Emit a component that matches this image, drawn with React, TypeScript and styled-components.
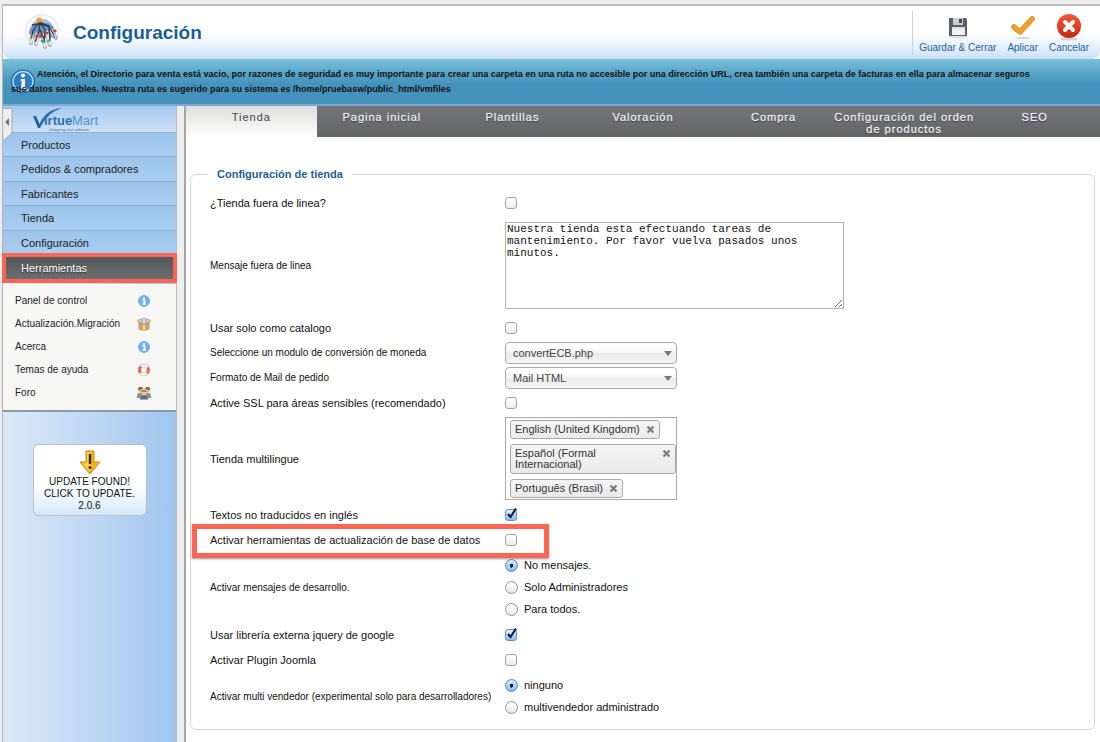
import React from 'react';
import styled, { createGlobalStyle, css } from 'styled-components';

const GlobalStyle = createGlobalStyle`
  *, *::after { box-sizing: border-box; }
  body {
    margin: 0;
    background: #eeeeee;
    color: #111;
    font-family: "Liberation Sans", Arial, sans-serif;
    font-size: 11px;
  }
  button, input, select, textarea { font: inherit; color: inherit; margin: 0; }
`;

const Page = styled.div`
  min-height: 100vh;
  padding: 4px 0 0 2px;
  display: flex;
  flex-direction: column;
`;

const Shell = styled.div`
  flex: 1;
  display: flex;
  flex-direction: column;
  border-top: 2px solid #b9b9b9;
  border-left: 1px solid #b4b4b4;
  background: #fff;
`;

const Header = styled.header`
  height: 53px;
  display: flex;
  align-items: center;
  justify-content: space-between;
  padding-left: 20px;
  background: linear-gradient(#ffffff 0%, #ffffff 50%, #e8f2fc 75%, #cae0f8 100%);
  border-radius: 0 0 8px 8px;
`;

const TitleGroup = styled.div`
  display: flex;
  align-items: center;
  gap: 11px;
`;

const Title = styled.h1`
  margin: 0;
  font-size: 19px;
  line-height: 24px;
  color: #1b5f98;
`;

const Toolbar = styled.div`
  display: flex;
  align-items: flex-end;
  height: 44px;
  gap: 11px;
  padding: 0 11px 1px 6px;
  border-left: 1px solid #cfcfcf;
`;

const ToolButton = styled.button`
  display: flex;
  flex-direction: column;
  align-items: center;
  border: 0;
  padding: 0;
  background: none;
  color: #1f5f99;
  font-size: 10px;
  line-height: 12px;
`;

const Notice = styled.div`
  position: relative;
  height: 47px;
  padding: 8px 60px 0 8px;
  background: linear-gradient(#7cc1da 0%, #5aa6c9 30%, #4592bd 55%, #4592bd 100%);
  border-bottom: 2px solid #7fa9d2;
  font-size: 9px;
  font-weight: bold;
  line-height: 15px;
  p { position: relative; margin: 0; text-indent: 26px; }
`;

const NoticeIcon = styled.svg`
  position: absolute;
  left: 7px;
  top: 9px;
`;

const Body = styled.div`
  flex: 1;
  display: grid;
  grid-template-columns: 183px minmax(0, 1fr);
`;

const Side = styled.aside`
  position: relative;
  display: flex;
  flex-direction: column;
  background: linear-gradient(90deg, #dbe9f8 0%, #bcd6f3 55%, #9cc3ec 100%);
  border-right: 2px solid #a6a6a6;
  box-shadow: inset -7px 0 0 #eeeeee, inset -8px 0 0 #bcbcbc;
  padding-right: 8px;
`;

const Collapse = styled.button`
  position: absolute;
  left: 0;
  top: 2px;
  border: 0;
  padding: 0;
  background: none;
  line-height: 0;
`;

const Brand = styled.a`
  height: 26px;
  padding-left: 28px;
  background: linear-gradient(#a5c9f0, #cfe2f7);
  line-height: 0;
`;

const Menu = styled.nav`
  display: flex;
  flex-direction: column;
`;

const MenuItem = styled.a<{ $active?: boolean }>`
  height: 24px;
  padding-left: 18px;
  line-height: 24px;
  text-decoration: none;
  color: #222;
  background: linear-gradient(#9dc4ea, #aacdf2);
  border-top: 1px solid #8ab0da;
  &:nth-child(even) { height: 25px; }
  ${p => p.$active && css`
    && { height: 22px; }
    margin: 3px 3px 5px;
    padding-left: 15px;
    line-height: 22px;
    color: #fff;
    border: 0;
    background: linear-gradient(#56575a, #6b6c70);
    outline: 4px solid #fb6554;
    text-shadow: 0 1px 1px #333;
  `}
`;

const SubMenu = styled.nav`
  padding: 5px 0 6px;
  background: #f7f7f6;
  border-bottom: 2px solid #8c9aa8;
`;

const SubItem = styled.a`
  display: grid;
  grid-template-columns: 122px 16px;
  align-items: center;
  height: 23px;
  padding-left: 12px;
  font-size: 10px;
  color: #222;
  text-decoration: none;
`;

const UpdateBox = styled.a`
  display: flex;
  flex-direction: column;
  align-items: center;
  align-self: center;
  width: 114px;
  margin-top: 32px;
  padding: 5px 0 3px;
  border: 1px solid #b6bfc9;
  border-radius: 6px;
  background: linear-gradient(#fff 0%, #fff 55%, #d6e8fa 100%);
  color: #111;
  text-align: center;
  text-decoration: none;
  font-size: 10px;
  line-height: 12px;
`;

const Main = styled.main`
  min-width: 0;
`;

const Tabs = styled.div`
  display: grid;
  grid-template-columns: repeat(7, minmax(0, 1fr));
  height: 31px;
  background: linear-gradient(#747578, #636468);
`;

const Tab = styled.button<{ $active?: boolean }>`
  display: flex;
  justify-content: center;
  align-items: flex-start;
  border: 0;
  padding: 5px 0 0;
  background: none;
  color: #f4f4f4;
  font-size: 11px;
  line-height: 12px;
  letter-spacing: 1px;
  white-space: pre;
  text-shadow: 0 1px 1px #333, 0 0 1px #fff;
  ${p => p.$active && css`
    background: linear-gradient(#dededc, #ffffff);
    color: #444;
    text-shadow: none;
  `}
`;

const Fieldset = styled.fieldset`
  margin: 30px 5px 0 4px;
  padding: 9px 0 9px 19px;
  border: 1px solid #d4d4d4;
  border-radius: 6px;
`;

const Legend = styled.legend`
  margin-left: -2px;
  padding: 0 9px;
  color: #1b5f98;
  font-weight: bold;
  line-height: 14px;
`;

const Row = styled.div<{ $h?: number; $marked?: boolean }>`
  position: relative;
  display: grid;
  grid-template-columns: 295px minmax(0, 1fr);
  align-items: center;
  min-height: ${p => p.$h ?? 25}px;
  ${p => p.$marked && css`
    &::after {
      content: "";
      position: absolute;
      left: -18px;
      top: -3px;
      width: 357px;
      height: 34px;
      border: 5px solid #fb6554;
      box-shadow: 0 1px 2px #999;
      pointer-events: none;
    }
  `}
`;

const Label = styled.label<{ $small?: boolean }>`
  font-size: ${p => (p.$small ? 10 : 11)}px;
  white-space: nowrap;
`;

const Check = styled.input.attrs({ type: 'checkbox' })`
  appearance: none;
  display: block;
  width: 12px;
  height: 12px;
  border: 1px solid #a4a4a4;
  border-radius: 3px;
  background: linear-gradient(#fff, #ececec);
  &:checked {
    border-color: #6b8fb8;
    background: linear-gradient(#e3f1fd, #8cbdf0);
  }
`;

const CheckWrap = styled.span`
  position: relative;
  width: 12px;
  svg { position: absolute; left: 1px; top: -2px; pointer-events: none; }
  input:not(:checked) + svg { display: none; }
`;

const RadioGroup = styled.div`
  display: flex;
  flex-direction: column;
`;

const RadioLine = styled.label`
  display: flex;
  align-items: center;
  gap: 6px;
  height: 22px;
`;

const Radio = styled.input.attrs({ type: 'radio' })`
  appearance: none;
  width: 13px;
  height: 13px;
  border: 1px solid #949494;
  border-radius: 50%;
  background: linear-gradient(#fff, #e8e8e8);
  &:checked {
    border-color: #5f86b3;
    background: radial-gradient(circle, #0d2340 0 2px, transparent 2px), linear-gradient(#d8eafb, #86bbf0);
  }
`;

const Message = styled.textarea`
  display: block;
  width: 339px;
  height: 87px;
  padding: 0 1px;
  border: 1px solid #b3b3b3;
  background: #fff;
  font-family: "Liberation Mono", "Courier New", monospace;
  font-size: 11px;
  line-height: 12px;
`;

const SelectWrap = styled.span`
  position: relative;
  width: 172px;
  svg { position: absolute; right: 5px; top: 9px; pointer-events: none; }
`;

const Select = styled.select`
  appearance: none;
  display: block;
  width: 100%;
  height: 22px;
  padding: 0 7px;
  border: 1px solid #a9a9a9;
  border-radius: 4px;
  background: linear-gradient(#fff 20%, #f4f4f4 50%, #ebebeb 52%, #f4f4f4 100%);
  color: #444;
`;

const TagBox = styled.div`
  width: 172px;
  height: 83px;
  display: flex;
  flex-direction: column;
  align-items: flex-start;
  gap: 5px;
  padding: 2px 0 2px 4px;
  border: 1px solid #aaa;
  background: #fff;
`;

const Tag = styled.span`
  display: flex;
  gap: 6px;
  padding: 3px 4px;
  border: 1px solid #aaa;
  border-radius: 3px;
  background: linear-gradient(#f5f5f5, #eaeaea);
  color: #333;
  line-height: 11px;
`;

const Remove = styled.button`
  display: block;
  height: 11px;
  border: 0;
  padding: 0;
  background: none;
  line-height: 0;
`;

const CheckBox = ({ id, on }: { id: string; on?: boolean }) => (
  <CheckWrap>
    <Check id={id} defaultChecked={on} />
    <svg width="12" height="12" viewBox="0 0 12 12">
      <path d="M2 7 L4.5 10 L10 1.5" fill="none" stroke="#0f2238" strokeWidth="2.2" />
    </svg>
  </CheckWrap>
);

const CheckRow = ({ id, text, on, marked }: { id: string; text: string; on?: boolean; marked?: boolean }) => (
  <Row $marked={marked}>
    <Label htmlFor={id}>{text}</Label>
    <CheckBox id={id} on={on} />
  </Row>
);

const SelectRow = ({ id, text, value }: { id: string; text: string; value: string }) => (
  <Row>
    <Label htmlFor={id} $small>{text}</Label>
    <SelectWrap>
      <Select id={id}><option>{value}</option></Select>
      <svg width="8" height="5"><path d="M0 0 H8 L4 5 Z" fill="#777" /></svg>
    </SelectWrap>
  </Row>
);

const RadioRow = ({ name, text, options, h }: { name: string; text: string; options: string[]; h: number }) => (
  <Row $h={h} role="radiogroup" aria-label={text}>
    <Label as="span" $small>{text}</Label>
    <RadioGroup>
      {options.map((o, i) => (
        <RadioLine key={o}><Radio name={name} defaultChecked={i === 0} />{o}</RadioLine>
      ))}
    </RadioGroup>
  </Row>
);

const Language = ({ children }: { children: React.ReactNode }) => (
  <Tag>
    <span>{children}</span>
    <Remove type="button" aria-label="Quitar">
      <svg width="9" height="11" viewBox="0 0 9 11">
        <path d="M1.5 2.5 L7.5 8.5 M7.5 2.5 L1.5 8.5" stroke="#777" strokeWidth="2" />
      </svg>
    </Remove>
  </Tag>
);

const ConfigIcon = () => (
  <svg width="39" height="38" viewBox="0 0 39 38">
    <circle cx="19" cy="17" r="17" fill="#e6ebf1" />
    <circle cx="19" cy="17" r="15.500" fill="#fafbfc" />
    <path d="M6 20 A13 13 0 1 1 32 20 L28 24 L10 24Z" fill="#6f93c4" />
    <path d="M8 11 Q19 -2 30 11 Q20 6 8 11Z" fill="#a9c0df" />
    <g fill="none" stroke="#adadb2" strokeWidth="4" strokeLinecap="round">
      <path d="M9 22 L8 29 M14 23 L13 30 M20 24 L22 33 M25 23 L27 31 M30 19 L33 24" />
    </g>
    <g fill="none" stroke="#e6e6e9" strokeWidth="3" strokeLinecap="round">
      <path d="M9 21 L8 28 M14 20 L13 29 M20 21 L22 32 M24 18 L27 30 M28 16 L32 23" />
    </g>
    <g fill="none" stroke="#34383f" strokeWidth="1.300">
      <path d="M16 8 L10 17 L8 25 M17 8 L16 17 L12 28 M17 8 L22 16 L21 29 M17 8 L26 13 L27 27 M17 16 L21 25 M26 13 L31 21" />
    </g>
    <path d="M9 11 Q16 9 26 12" fill="none" stroke="#34383f" strokeWidth="1.500" />
    <circle cx="16" cy="6" r="2.600" fill="#f2a024" />
    <g fill="#e8331f"><circle cx="14" cy="22" r="1.500" /><circle cx="24" cy="19" r="1.500" /><circle cx="32" cy="17" r="1.600" /><circle cx="18" cy="22" r="1.500" /></g>
    <g fill="#3f8ee0"><circle cx="19" cy="27" r="1.400" /><circle cx="31" cy="23" r="1.400" /><circle cx="29" cy="13" r="1.300" /></g>
    <g fill="#4cc94a"><circle cx="25" cy="27" r="1.600" /><circle cx="8" cy="24" r="1.300" /></g>
  </svg>
);

const SaveIcon = () => (
  <svg width="26" height="30" viewBox="0 0 26 30">
    <ellipse cx="13" cy="25" rx="10" ry="1.5" fill="#dedede" />
    <path d="M4 6 H21 L22 8 V24 H4Z" fill="#5c5f65" />
    <path d="M8 6 H18 V13 H8Z" fill="#c9cbd0" /><path d="M14 7 H17 V11 H14Z" fill="#45484e" />
    <path d="M7 15 H20 V23 H7Z" fill="#f1f1f1" /><path d="M7 16 H20" stroke="#ccc" />
  </svg>
);

const ApplyIcon = () => (
  <svg width="28" height="30" viewBox="0 0 28 30">
    <ellipse cx="14" cy="26" rx="7" ry="1" fill="#d5d5d5" />
    <path d="M5 15 L11 20 L23 7" fill="none" stroke="#d9861d" strokeWidth="5.5" strokeLinecap="round" strokeLinejoin="round" />
    <path d="M5 15 L11 20 L23 7" fill="none" stroke="#f1a02c" strokeWidth="4" strokeLinecap="round" strokeLinejoin="round" />
  </svg>
);

const CancelIcon = () => (
  <svg width="28" height="30" viewBox="0 0 28 30">
    <defs><linearGradient id="red" x2="0" y2="1"><stop stopColor="#f4573b" /><stop offset=".55" stopColor="#e33b1f" /><stop offset="1" stopColor="#b52a12" /></linearGradient></defs>
    <ellipse cx="14" cy="27" rx="9" ry="1.6" fill="#cfd3d8" />
    <circle cx="14" cy="14" r="12" fill="url(#red)" />
    <path d="M10 10 L18 18 M18 10 L10 18" stroke="#fff" strokeWidth="4" strokeLinecap="round" />
  </svg>
);

const InfoIcon = () => (
  <svg width="14" height="14" viewBox="0 0 14 14">
    <circle cx="7" cy="7" r="5.4" fill="#74b3ea" stroke="#5f9fdb" />
    <path d="M5.5 6 H7.5 V10 M5.5 10 H9" fill="none" stroke="#fff" strokeWidth="1.6" /><circle cx="7" cy="3.9" r="1" fill="#fff" />
  </svg>
);

const BoxIcon = () => (
  <svg width="14" height="14" viewBox="0 0 14 14">
    <path d="M2 6 H12 V12 L7 13.5 L2 12Z" fill="#d9a565" stroke="#b98448" strokeWidth=".7" />
    <path d="M2 6 L0.5 3.5 L4 2 L7 5 L10 2 L13.5 3.5 L12 6Z" fill="#efc68f" stroke="#b98448" strokeWidth=".7" />
    <circle cx="7" cy="3.8" r="3" fill="#8ec1ee" /><path d="M7 2 V6" stroke="#fff" strokeWidth="1.2" />
    <path d="M7 8 V13" stroke="#f3d5a8" strokeWidth="2" />
  </svg>
);

const HelpIcon = () => (
  <svg width="14" height="14" viewBox="0 0 14 14">
    <circle cx="7" cy="7" r="4.5" fill="none" stroke="#c4c4c4" strokeWidth="3.4" />
    <circle cx="7" cy="7" r="4.5" fill="none" stroke="#f8f8f8" strokeWidth="2.2" />
    <circle cx="7" cy="7" r="4.5" fill="none" stroke="#f26450" strokeWidth="2.8" strokeDasharray="7 7.13" strokeDashoffset="3.5" />
  </svg>
);

const PeopleIcon = () => (
  <svg width="14" height="14" viewBox="0 0 14 14">
    <path d="M0 11 Q0 6 4 7 L10 7 Q14 6 14 11 V12 H0Z" fill="#8b939b" />
    <circle cx="3.5" cy="4" r="2.5" fill="#e8b98c" /><path d="M1 4 Q1 0.5 3.5 1 Q6 .5 6 3Z" fill="#8a5a35" />
    <circle cx="10.5" cy="4" r="2.5" fill="#e8b98c" /><path d="M8 3 Q9 .5 11 1 Q13.5 1 13 4Z" fill="#8a5a35" />
    <path d="M3 13.5 Q3 9 7 9 Q11 9 11 13.5Z" fill="#646c75" />
    <circle cx="7" cy="7" r="2.5" fill="#f3c89c" /><path d="M4.5 6.5 Q4.5 3.5 7 3.8 Q9.5 3.5 9.5 6.5 L7 5.5Z" fill="#a77343" />
  </svg>
);

const BrandLogo = () => (
  <svg width="70" height="26" viewBox="0 0 70 26">
    <path d="M7 22 Q13 3 31 2 Q17 6 9 22Z" fill="#2c6fae" />
    <path d="M2 10 H5 L9 19 L8 22 H7Z" fill="#235f9d" />
    <text x="13" y="19" fontFamily="Liberation Sans" fontSize="13" fontWeight="bold" fill="#2d70ac">irtue</text>
    <text x="41" y="19" fontFamily="Liberation Sans" fontSize="13" fill="#4a92cd">Mart</text>
    <text x="18" y="25" fontFamily="Liberation Sans" fontSize="4" fill="#4e6d90">shopping cart software</text>
  </svg>
);

const menu = ['Productos', 'Pedidos & compradores', 'Fabricantes', 'Tienda', 'Configuración', 'Herramientas'];
const tabs = ['Tienda', 'Pagina inicial', 'Plantillas', 'Valoración', 'Compra', 'Configuración del orden\nde productos', 'SEO'];
const tools: [string, React.ReactNode][] = [
  ['Panel de control', <InfoIcon />],
  ['Actualización.Migración', <BoxIcon />],
  ['Acerca', <InfoIcon />],
  ['Temas de ayuda', <HelpIcon />],
  ['Foro', <PeopleIcon />],
];

export default function App() {
  return (
    <Page>
      <GlobalStyle />
      <Shell>
        <Header>
          <TitleGroup><ConfigIcon /><Title>Configuración</Title></TitleGroup>
          <Toolbar>
            <ToolButton><SaveIcon />Guardar &amp; Cerrar</ToolButton>
            <ToolButton><ApplyIcon />Aplicar</ToolButton>
            <ToolButton><CancelIcon />Cancelar</ToolButton>
          </Toolbar>
        </Header>
        <Notice>
          <NoticeIcon width="26" height="27" viewBox="0 0 26 27">
            <circle cx="13" cy="13.5" r="11.5" fill="#2b7cc4" stroke="#1c5f9f" />
            <circle cx="13" cy="13.5" r="10" fill="none" stroke="#b5d8f2" strokeWidth="1.4" />
            <path d="M11 11 H15 V19 H16 V21 H10 V19 H11.500 V13 H10.500Z" fill="#fff" /><circle cx="13" cy="7.500" r="2" fill="#fff" />
          </NoticeIcon>
          <p>Atención, el Directorio para venta está vacio, por razones de seguridad es muy importante para crear una carpeta en una ruta no accesible por una dirección URL, crea también una carpeta de facturas en ella para almacenar seguros sus datos sensibles. Nuestra ruta es sugerido para su sistema es /home/pruebasw/public_html/vmfiles</p>
        </Notice>
        <Body>
          <Side>
            <Brand href="#" aria-label="VirtueMart"><BrandLogo /></Brand>
            <Collapse aria-label="Contraer menú">
              <svg width="10" height="34" viewBox="0 0 10 34">
                <path d="M0 .5 H9 V25 L.5 32.500" fill="#ededed" stroke="#a8a8a8" />
                <path d="M6 10 V18 L2 14Z" fill="#777" />
              </svg>
            </Collapse>
            <Menu>
              {menu.map(m => <MenuItem key={m} href="#" $active={m === 'Herramientas'}>{m}</MenuItem>)}
            </Menu>
            <SubMenu>
              {tools.map(([t, icon]) => <SubItem key={t} href="#"><span>{t}</span>{icon}</SubItem>)}
            </SubMenu>
            <UpdateBox href="#">
              <svg width="24" height="26" viewBox="0 0 24 26">
                <path d="M8 1 H16 V12 H22 L12 24 L2 12 H8Z" fill="#f5b322" stroke="#d08a12" />
                <path d="M9 2 H12 V22 L4 13 H9Z" fill="#fbd04f" />
                <path d="M12 4 V14" stroke="#3b2a08" strokeWidth="2.4" /><circle cx="12" cy="17.5" r="1.5" fill="#3b2a08" />
              </svg>
              <span>UPDATE FOUND!<br />CLICK TO UPDATE.<br />2.0.6</span>
            </UpdateBox>
          </Side>
          <Main>
            <Tabs role="tablist">
              {tabs.map((t, i) => (
                <Tab key={t} role="tab" aria-selected={i === 0} $active={i === 0}>{t}</Tab>
              ))}
            </Tabs>
            <Fieldset>
              <Legend>Configuración de tienda</Legend>
              <CheckRow id="offline" text="¿Tienda fuera de linea?" />
              <Row $h={100}>
                <Label htmlFor="msg" $small>Mensaje fuera de linea</Label>
                <Message id="msg" defaultValue="Nuestra tienda esta efectuando tareas de mantenimiento. Por favor vuelva pasados unos minutos." />
              </Row>
              <CheckRow id="catalog" text="Usar solo como catalogo" />
              <SelectRow id="currency" text="Seleccione un modulo de conversión de moneda" value="convertECB.php" />
              <SelectRow id="mail" text="Formato de Mail de pedido" value="Mail HTML" />
              <CheckRow id="ssl" text="Active SSL para áreas sensibles (recomendado)" />
              <Row $h={87}>
                <Label as="span">Tienda multilingue</Label>
                <TagBox>
                  <Language>English (United Kingdom)</Language>
                  <Language>Español (Formal Internacional)</Language>
                  <Language>Português (Brasil)</Language>
                </TagBox>
              </Row>
              <CheckRow id="english" text="Textos no traducidos en inglés" on />
              <CheckRow id="dbtools" text="Activar herramientas de actualización de base de datos" marked />
              <RadioRow name="debug" h={70} text="Activar mensajes de desarrollo." options={['No mensajes.', 'Solo Administradores', 'Para todos.']} />
              <CheckRow id="jquery" text="Usar librería externa jquery de google" on />
              <CheckRow id="plugin" text="Activar Plugin Joomla" />
              <RadioRow name="vendor" h={48} text="Activar multi vendedor (experimental solo para desarrolladores)" options={['ninguno', 'multivendedor administrado']} />
            </Fieldset>
          </Main>
        </Body>
      </Shell>
    </Page>
  );
}
